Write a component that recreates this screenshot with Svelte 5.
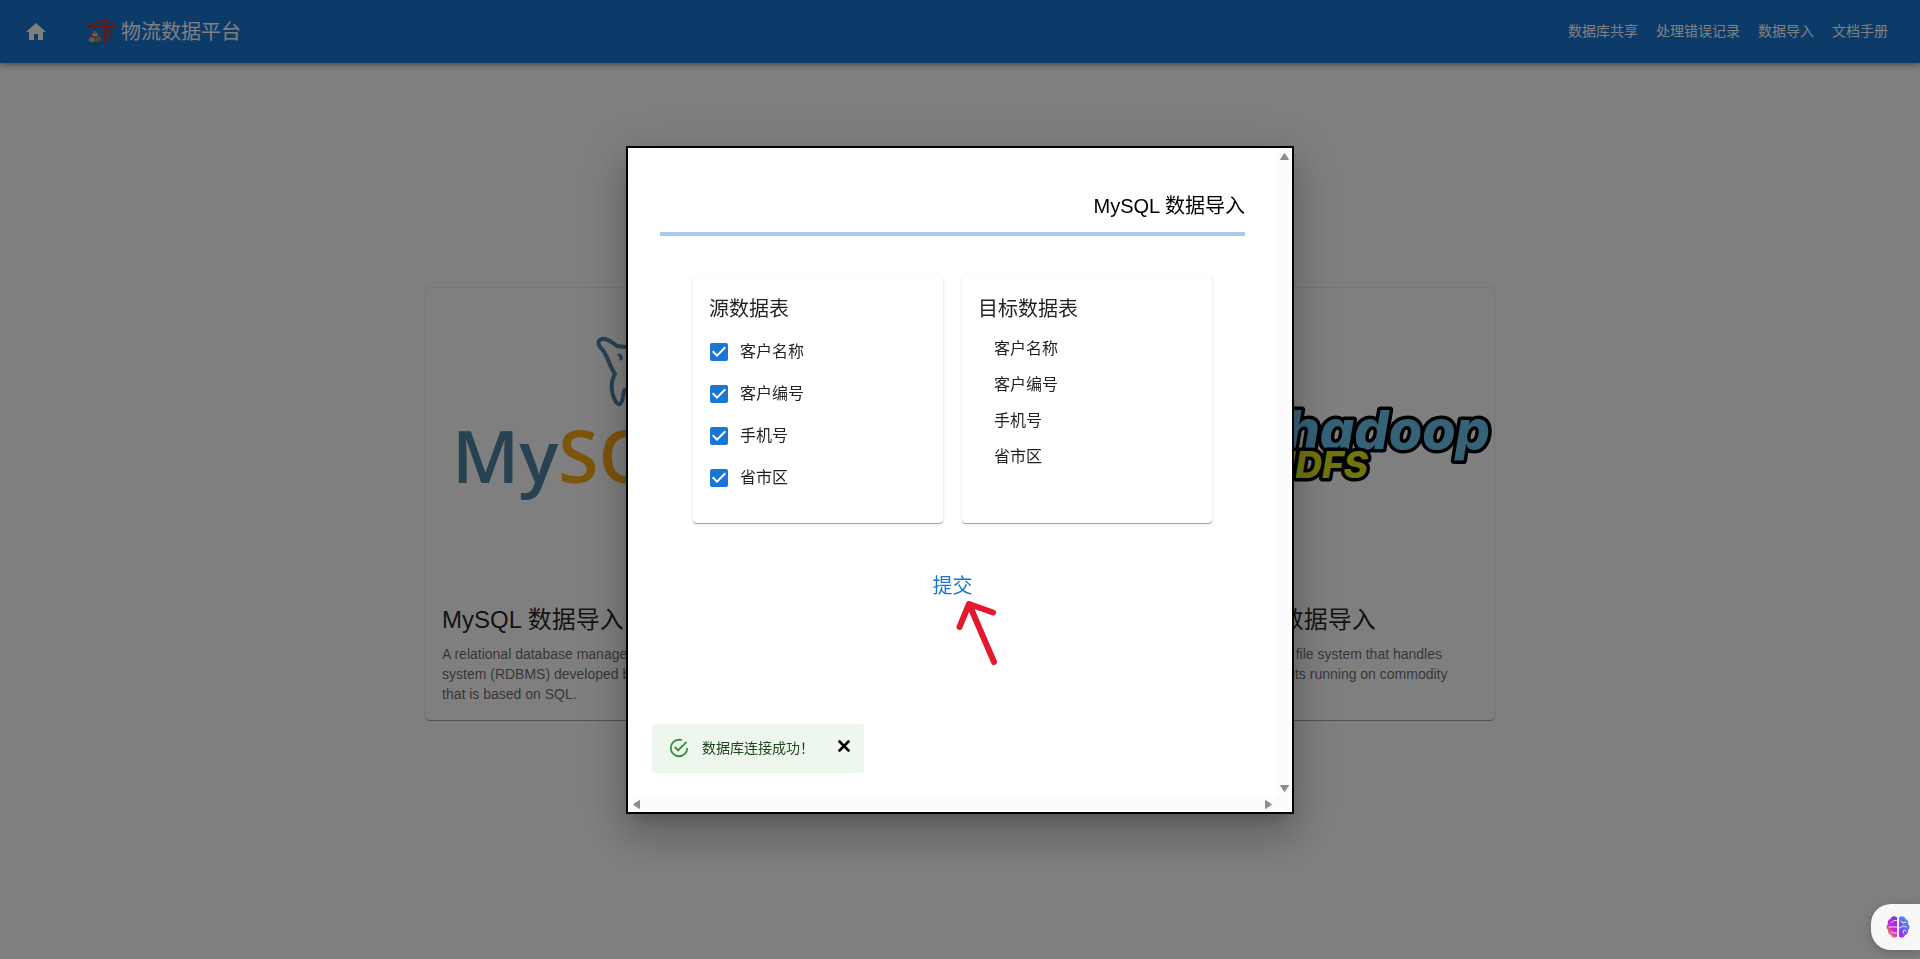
<script>
  const links = ['数据库共享', '处理错误记录', '数据导入', '文档手册'];
  let fields = $state([
    { name: '客户名称', checked: true },
    { name: '客户编号', checked: true },
    { name: '手机号', checked: true },
    { name: '省市区', checked: true }
  ]);
  let alertOpen = $state(true);
</script>

<header class="appbar">
  <a class="home" href="#home" aria-label="首页">
    <svg viewBox="0 0 24 24" width="24" height="24"><path fill="#fff" d="M10 20v-6h4v6h5v-8h3L12 3 2 12h3v8z" /></svg>
  </a>
  <div class="brand">
    <svg viewBox="0 0 29 26" width="29" height="26" aria-hidden="true">
      <path d="M2 16h12l-1 7H4z" fill="#d63a1e" />
      <path d="M5.500 14h5v3h-5z" fill="#ded6c6" />
      <path d="M8 12v3" stroke="#d18a25" stroke-width="3" />
      <circle cx="5" cy="21" r="3" fill="#b8b8b8" />
      <circle cx="11" cy="20.500" r="3.500" fill="#8d8d8d" />
      <path d="M1 23.500l2-1 2 1 3-1 2 1 3-1 3 1V26H0z" fill="#1671a3" />
      <path d="M2 6L17.500 1 28 6M24.500 7v17M18 19h6M18 18l6-10M18 8l6 10M8 7v4" fill="none" stroke="#d92e12" stroke-width="1.200" />
      <path d="M1 7h28M17.500 1v24" stroke="#d92e12" stroke-width="2" />
    </svg>
    <span>物流数据平台</span>
  </div>
  <nav>
    {#each links as link}<a href="#{link}">{link}</a>{/each}
  </nav>
</header>

<main>
  <article class="card source">
    <svg viewBox="0 0 345 300" aria-label="MySQL">
      <g fill="none" stroke="#5284a4" stroke-width="4" stroke-linecap="round" stroke-linejoin="round">
        <path d="M216 64C208 58 201 60 191 58C184 53 180 50 176 51Q170 53 174 59C182 66 182 76 189 86C184 94 185 106 190 114Q195 120 197 109Q198 99 200 103L206 112" />
        <path d="M193 67q3 1 2 4" stroke-width="3" />
      </g>
      <text class="wordmark" x="26" y="195" fill="#5284a4">My<tspan fill="#fba818">SQL</tspan></text>
    </svg>
    <div class="body">
      <h2>MySQL 数据导入</h2>
      <p>A relational database management<br />system (RDBMS) developed by Oracle<br />that is based on SQL.</p>
    </div>
  </article>
  <article class="card source">
    <svg viewBox="0 0 345 300" aria-label="Hadoop HDFS">
      <g class="hadoop" stroke="#000" stroke-width="7" stroke-linejoin="round" text-anchor="end">
        <text x="341" y="161" font-size="54" fill="#6cc5f0">hadoop</text>
        <text x="219" y="190" font-size="37" fill="#e2ea1c">HDFS</text>
      </g>
    </svg>
    <div class="body">
      <h2>Hadoop 大数据导入</h2>
      <p>HDFS - a distributed file system that handles<br />various large data sets running on commodity<br />hardware.</p>
    </div>
  </article>
</main>

<div class="backdrop">
  <section class="dialog" role="dialog" aria-modal="true" aria-labelledby="dialog-title">
    <div class="content">
      <h1 id="dialog-title">MySQL 数据导入</h1>
      <div class="tables">
        <div class="card panel">
          <h3>源数据表</h3>
          {#each fields as field}
            <label><input type="checkbox" bind:checked={field.checked} />{field.name}</label>
          {/each}
        </div>
        <div class="card panel">
          <h3>目标数据表</h3>
          <ul>
            {#each fields as field}<li>{field.name}</li>{/each}
          </ul>
        </div>
      </div>
      <button class="submit" type="button">提交
        <svg class="arrow" viewBox="0 0 42 68" width="42" height="68" aria-hidden="true">
          <path d="M38 63L13 5L37 13.500M13 5L3.500 28" fill="none" stroke="#e5182e" stroke-width="6" stroke-linecap="round" stroke-linejoin="round" />
        </svg>
      </button>
      {#if alertOpen}
        <div class="alert" role="alert">
          <svg viewBox="0 0 24 24" width="22" height="22" aria-hidden="true"><path fill="#3f8d43" d="M20,12A8,8 0 0,1 12,20A8,8 0 0,1 4,12A8,8 0 0,1 12,4C12.76,4 13.5,4.11 14.2,4.31L15.77,2.74C14.61,2.26 13.34,2 12,2A10,10 0 0,0 2,12A10,10 0 0,0 12,22A10,10 0 0,0 22,12M7.91,10.08L6.5,11.5L11,16L21,6L19.59,4.58L11,13.17L7.91,10.08Z" /></svg>
          <span>数据库连接成功！</span>
          <button type="button" aria-label="关闭" onclick={() => (alertOpen = false)}>
            <svg viewBox="0 0 12 12" width="12" height="12"><path d="M1.500 1.500l9 9M10.500 1.500l-9 9" stroke="#000" stroke-width="2.600" stroke-linecap="round" /></svg>
          </button>
        </div>
      {/if}
    </div>
    <div class="bar vertical" aria-hidden="true">
      <svg viewBox="0 0 9 7" width="9" height="7"><path d="M4.500 0.500L8.500 6.500h-8z" /></svg>
      <svg viewBox="0 0 9 7" width="9" height="7"><path d="M4.500 6.500L8.500 0.500h-8z" /></svg>
    </div>
    <div class="bar horizontal" aria-hidden="true">
      <svg viewBox="0 0 7 9" width="7" height="9"><path d="M0.500 4.500L6.500 8.500v-8z" /></svg>
      <svg viewBox="0 0 7 9" width="7" height="9"><path d="M6.500 4.500L0.500 8.500v-8z" /></svg>
    </div>
    <div class="bar"></div>
  </section>
</div>

<button class="assistant" type="button" aria-label="AI 助手">
  <svg viewBox="0 0 24 22" width="24" height="22">
    <defs>
      <linearGradient id="left-lobe" x1="0.800" y1="0" x2="0.200" y2="1"><stop offset="0" stop-color="#7a35f0" /><stop offset="0.500" stop-color="#cb27d8" /><stop offset="1" stop-color="#ff9a2c" /></linearGradient>
      <linearGradient id="right-lobe" x1="0.800" y1="0" x2="0.200" y2="1"><stop offset="0" stop-color="#36a4ff" /><stop offset="0.600" stop-color="#6c5cf6" /><stop offset="1" stop-color="#b020e8" /></linearGradient>
    </defs>
    <path fill="url(#left-lobe)" d="M11 1.500C9-.5 5 .2 4.500 3C2 3.500 1.300 6 2 8C0 9.500 0 12.500 2 14C1.500 17 3 18.500 5 19C6 22 9.500 22.300 11 20.500z" />
    <path fill="url(#right-lobe)" d="M13 1.500C15-.5 19 .2 19.500 3C22 3.500 22.700 6 22 8C24 9.500 24 12.500 22 14C22.500 17 21 18.500 19 19C18 22 14.500 22.300 13 20.500z" />
    <path fill="none" stroke="#f4dcff" stroke-width="1" stroke-linecap="round" d="M10.500 4.500C8 4 7 5 5.500 6.500M3 11h7.500M5.500 16c2 0 2 1.500 5 1M15 5l2 2 3-1M13.500 12l4-2 3 1M17 17l1-3 2 1" />
  </svg>
</button>

<style>
  :global(body) {
    background: #fff;
    font-family: "Liberation Sans", "Noto Sans CJK SC", sans-serif;
    color: rgba(0, 0, 0, 0.87);
  }
  h1, h2, h3, p, ul { margin: 0; padding: 0; font-weight: 400; }
  button { border: 0; padding: 0; background: none; font: inherit; cursor: pointer; }
  svg { display: block; flex: none; }

  .appbar {
    display: flex;
    align-items: center;
    height: 63px;
    padding: 0 32px 0 24px;
    background: #1976d2;
    color: #fff;
    box-shadow: 0 2px 4px -1px rgba(0, 0, 0, 0.2), 0 4px 5px rgba(0, 0, 0, 0.14), 0 1px 10px rgba(0, 0, 0, 0.12);
  }
  .brand { display: flex; align-items: center; gap: 5px; margin-left: 39px; font-size: 20px; line-height: 32px; }
  nav { display: flex; gap: 18px; margin-left: auto; padding-bottom: 2px; font-size: 14px; line-height: 24px; }
  nav a { color: inherit; text-decoration: none; }

  .card {
    background: #fff;
    border-radius: 4px;
    box-shadow: 0 1px 0 rgba(0, 0, 0, 0.2), 0 1px 1px rgba(0, 0, 0, 0.14), 0 1px 3px rgba(0, 0, 0, 0.12);
  }

  main {
    display: flex;
    justify-content: space-between;
    max-width: 1068px;
    margin: 0 auto;
    padding-top: 225px;
  }
  .source {
    width: 345px;
    border-bottom: 1px solid #a4a4a4;
    box-shadow: 0 0 3px rgba(0, 0, 0, 0.2);
  }
  .wordmark { font-family: "Open Sans", sans-serif; font-size: 73px; font-weight: 600; }
  .hadoop { font-family: Inter, sans-serif; font-weight: 800; font-style: italic; paint-order: stroke; }
  .body { padding: 16px; }
  h2 { margin-bottom: 8px; font-size: 24px; line-height: 32px; }
  p { font-size: 14px; line-height: 20px; color: rgba(0, 0, 0, 0.6); white-space: nowrap; }

  .backdrop {
    position: fixed;
    inset: 0;
    display: grid;
    place-items: center;
    padding-top: 1px;
    background: rgba(0, 0, 0, 0.5);
  }
  .dialog {
    box-sizing: border-box;
    display: grid;
    grid-template: 1fr 15px / 1fr 15px;
    width: min(668px, 100%);
    min-height: 668px;
    border: 2px solid #000;
    background: #fff;
    box-shadow: 0 11px 15px -7px rgba(0, 0, 0, 0.2), 0 24px 38px 3px rgba(0, 0, 0, 0.14), 0 9px 46px 8px rgba(0, 0, 0, 0.12);
  }
  .content { position: relative; display: flex; flex-direction: column; padding: 42px 32px 32px; }
  h1 {
    padding-bottom: 10px;
    border-bottom: 4px solid #a8c9ed;
    font-size: 20px;
    line-height: 32px;
    text-align: right;
    color: #000;
  }
  .tables { display: flex; justify-content: center; gap: 19px; margin-top: 40px; }
  .panel { box-sizing: border-box; width: 250px; padding: 17px 16px 24px; }
  h3 { margin-bottom: 6px; font-size: 20px; line-height: 32px; }
  label { display: flex; align-items: center; gap: 12px; height: 42px; padding-left: 1px; font-size: 16px; line-height: 24px; }
  input {
    appearance: none;
    width: 18px;
    height: 18px;
    margin: 0;
    box-sizing: border-box;
    border: 2px solid #666;
    border-radius: 2px;
  }
  input:checked {
    border: 0;
    background: url("data:image/svg+xml,%3Csvg xmlns='http://www.w3.org/2000/svg' viewBox='3 3 18 18'%3E%3Cpath fill='%23fff' d='M10 17l-5-5 1.410-1.410L10 14.170l7.590-7.590L19 8z'/%3E%3C/svg%3E") #1976d2;
  }
  ul { display: grid; gap: 12px; padding: 6px 16px; list-style: none; }
  li { font-size: 16px; line-height: 24px; }
  .submit { position: relative; align-self: center; margin-top: 47px; font-size: 20px; line-height: 32px; color: #1976d2; }
  .arrow { position: absolute; left: 23px; top: 29px; }

  .alert {
    position: absolute;
    left: 24px;
    bottom: 24px;
    display: flex;
    align-items: center;
    box-sizing: border-box;
    width: 212px;
    height: 49px;
    padding: 0 14px 1px 16px;
    border-radius: 4px;
    background: #edf7ed;
    color: #1e4620;
    font-size: 14px;
    line-height: 20px;
  }
  .alert span { margin-left: 12px; white-space: nowrap; }
  .alert button { margin-left: auto; padding-bottom: 4px; }

  .bar { display: flex; justify-content: space-between; align-items: center; background: #fcfcfc; }
  .bar path { fill: #8b8b8b; stroke: #8b8b8b; stroke-linejoin: round; }
  .vertical { flex-direction: column; padding: 5px 0; }
  .horizontal { padding: 0 5px; }

  .assistant {
    position: fixed;
    right: 0;
    bottom: 9px;
    display: flex;
    align-items: center;
    width: 49px;
    height: 46px;
    padding-left: 15px;
    border-radius: 20px 0 0 20px;
    background: #f8f8f8;
    box-shadow: 0 2px 10px rgba(0, 0, 0, 0.2);
  }
</style>
